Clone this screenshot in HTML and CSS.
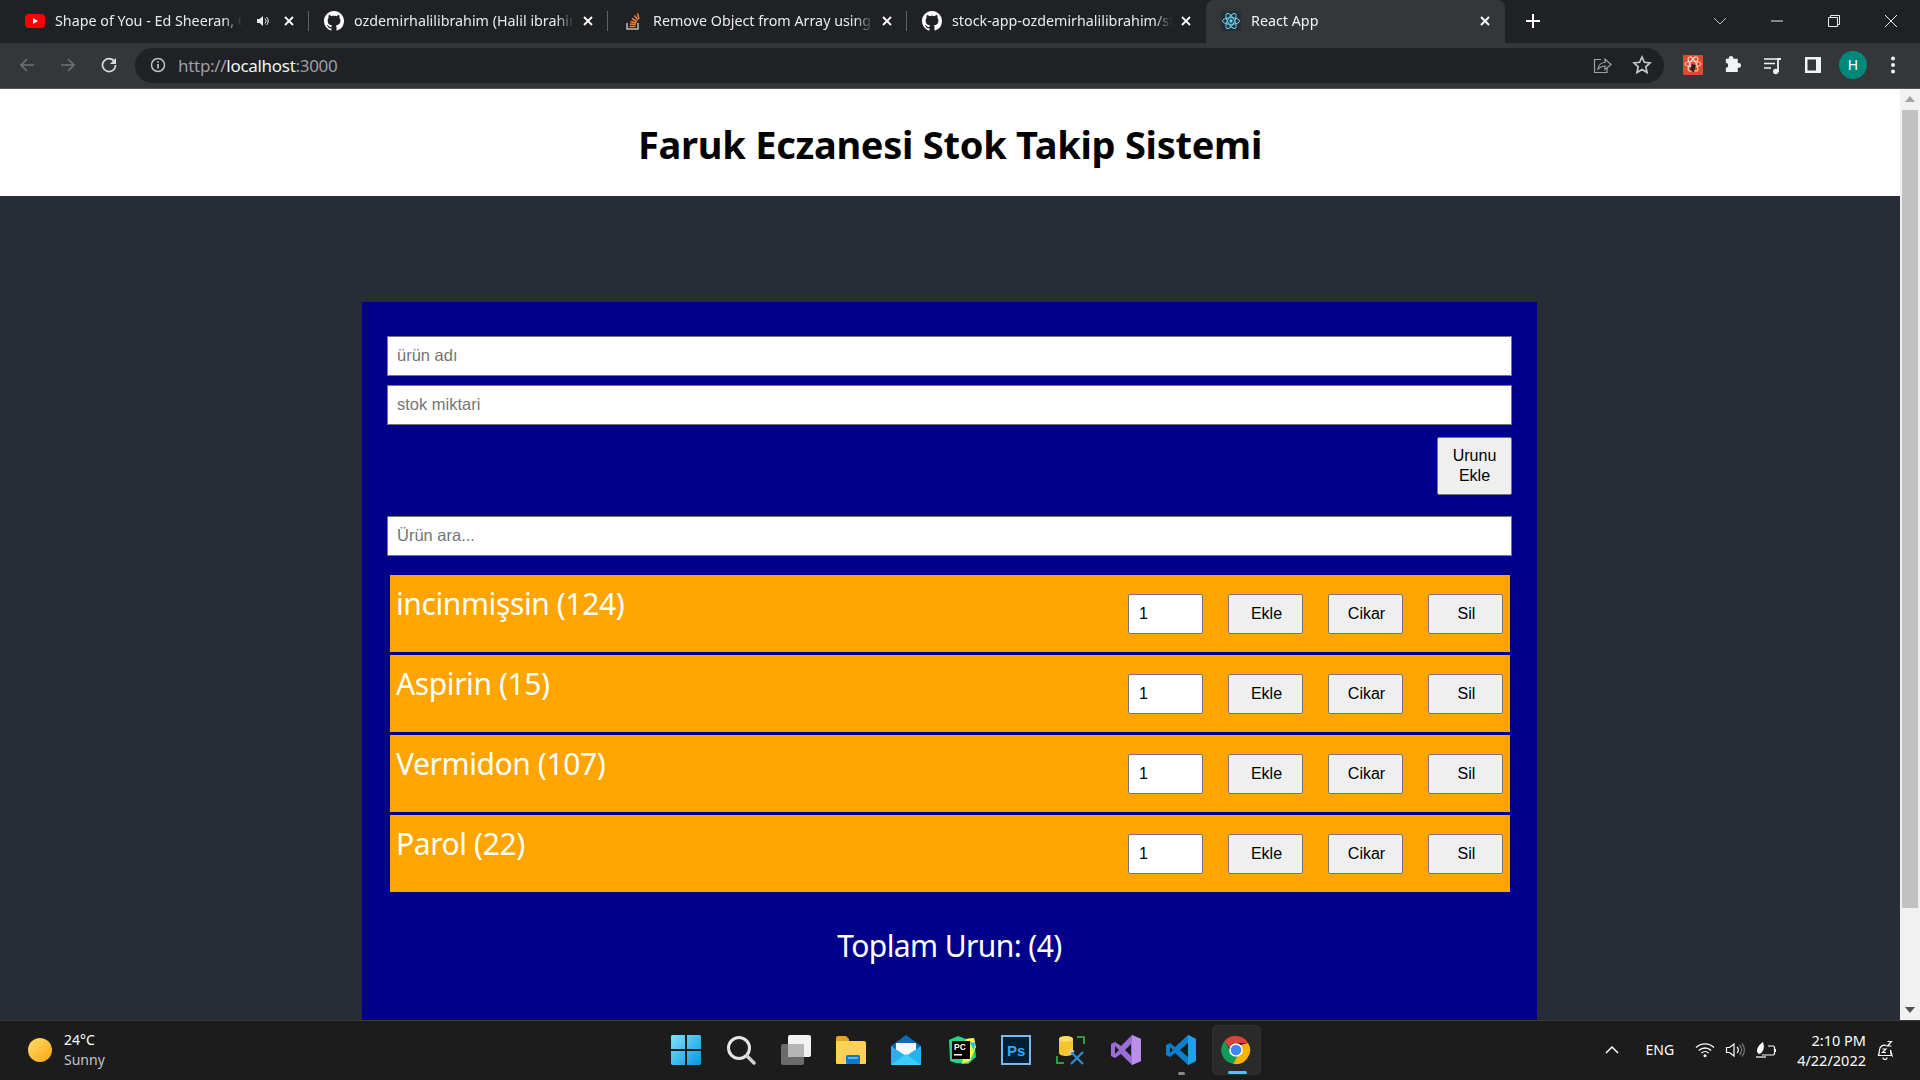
FILE: index.html
```html
<!DOCTYPE html>
<html lang="en">
<head>
    <meta charset="UTF-8">
    <meta name="viewport" content="width=device-width, initial-scale=1.0">
    <title>React App</title>
    <link rel="stylesheet" href="styles.css">
</head>
<body>
    <svg class="sprites" width="0" height="0">
        <symbol id="github" viewBox="0 0 16 16"><path fill="#fff" d="M8 0C3.58 0 0 3.58 0 8c0 3.54 2.29 6.53 5.47 7.59.4.07.55-.17.55-.38 0-.19-.01-.82-.01-1.49-2.01.37-2.53-.49-2.69-.94-.09-.23-.48-.94-.82-1.13-.28-.15-.68-.52-.01-.53.63-.01 1.08.58 1.23.82.72 1.21 1.87.87 2.33.66.07-.52.28-.87.51-1.07-1.78-.2-3.64-.89-3.64-3.95 0-.87.31-1.59.82-2.15-.08-.2-.36-1.02.08-2.12 0 0 .67-.21 2.2.82.64-.18 1.32-.27 2-.27.68 0 1.36.09 2 .27 1.53-1.04 2.2-.82 2.2-.82.44 1.1.16 1.92.08 2.12.51.56.82 1.27.82 2.15 0 3.07-1.87 3.75-3.65 3.95.29.25.54.73.54 1.48 0 1.07-.01 1.93-.01 2.2 0 .21.15.46.55.38A8.013 8.013 0 0016 8c0-4.42-3.58-8-8-8z"/></symbol>
        <symbol id="close" viewBox="0 0 12 12"><path d="M2 2l8 8M10 2l-8 8" stroke="#fff" stroke-width="1.8" fill="none"/></symbol>
    </svg>

    <div class="browser">
        <div class="tabstrip">
            <div class="tab">
                <svg class="tab-icon" viewBox="0 0 20 20"><rect y="3" width="20" height="14" rx="4" fill="#f00"/><path d="M8 7l5 3-5 3z" fill="#fff"/></svg>
                <span class="tab-title">Shape of You - Ed Sheeran, C</span>
                <svg class="tab-audio" viewBox="0 0 14 14"><path d="M1 5h2.500L7 2v10L3.500 9H1z" fill="#e8eaed"/><path d="M9 4.500a3.500 3.500 0 010 5M10.500 3a5.500 5.500 0 010 8" stroke="#e8eaed" fill="none"/></svg>
                <svg class="tab-close"><use href="#close"/></svg>
            </div>
            <div class="tab">
                <svg class="tab-icon"><use href="#github"/></svg>
                <span class="tab-title">ozdemirhalilibrahim (Halil ibrahim</span>
                <svg class="tab-close"><use href="#close"/></svg>
            </div>
            <div class="tab">
                <svg class="tab-icon" viewBox="0 0 20 20"><path d="M4 12v6h11v-6" fill="none" stroke="#bcbbbb" stroke-width="1.500"/><path d="M6.500 15.500h6M6.800 13l6 .6M7.500 10.500l5.800 1.500M9 7.500l5 3M11.500 4.500l3.500 4.500M14.500 2.500l1.500 5.500" stroke="#f48024" stroke-width="1.500"/></svg>
                <span class="tab-title">Remove Object from Array using</span>
                <svg class="tab-close"><use href="#close"/></svg>
            </div>
            <div class="tab">
                <svg class="tab-icon"><use href="#github"/></svg>
                <span class="tab-title">stock-app-ozdemirhalilibrahim/st</span>
                <svg class="tab-close"><use href="#close"/></svg>
            </div>
            <div class="tab tab-active">
                <svg class="tab-icon" viewBox="0 0 20 20"><rect width="20" height="20" rx="2" fill="#282c34"/><g fill="none" stroke="#61dafb" stroke-width="1"><ellipse cx="10" cy="10" rx="8.500" ry="3.300"/><ellipse cx="10" cy="10" rx="8.500" ry="3.300" transform="rotate(60 10 10)"/><ellipse cx="10" cy="10" rx="8.500" ry="3.300" transform="rotate(120 10 10)"/></g><circle cx="10" cy="10" r="1.700" fill="#61dafb"/></svg>
                <span class="tab-title">React App</span>
                <svg class="tab-close"><use href="#close"/></svg>
            </div>
            <svg class="new-tab" viewBox="0 0 16 16"><path d="M8 1v14M1 8h14" stroke="#fff" stroke-width="2"/></svg>
            <div class="window-controls">
                <svg viewBox="0 0 14 14"><path d="M1 4l6 6 6-6" stroke="#bdc1c6" fill="none"/></svg>
                <svg viewBox="0 0 14 14"><path d="M1 7h12" stroke="#e8eaed"/></svg>
                <svg viewBox="0 0 14 14"><path d="M1.500 3.500h9v9h-9zM3.500 3.500v-2h9v9h-2" stroke="#e8eaed" fill="none"/></svg>
                <svg viewBox="0 0 14 14"><path d="M1 1l12 12M13 1L1 13" stroke="#e8eaed" fill="none"/></svg>
            </div>
        </div>

        <div class="toolbar">
            <svg class="nav-icon" viewBox="0 0 16 16"><path d="M15 8H2M8 2L2 8l6 6" stroke="#6f7175" stroke-width="1.600" fill="none"/></svg>
            <svg class="nav-icon" viewBox="0 0 16 16"><path d="M1 8h13M8 2l6 6-6 6" stroke="#6f7175" stroke-width="1.600" fill="none"/></svg>
            <svg class="nav-icon" viewBox="0 0 16 16"><path d="M13.400 4.500A6.500 6.500 0 1014.500 8" stroke="#dadce0" stroke-width="1.700" fill="none"/><path d="M15 1v6H9z" fill="#dadce0"/></svg>
            <div class="omnibox">
                <svg class="omni-info" viewBox="0 0 16 16"><circle cx="8" cy="8" r="6.500" stroke="#bdc1c6" stroke-width="1.500" fill="none"/><path d="M8 7v4.500M8 4.300v1.500" stroke="#bdc1c6" stroke-width="1.700"/></svg>
                <span class="url">http://<b>localhost</b>:3000</span>
                <svg class="omni-icon" viewBox="0 0 20 20"><path d="M9 4.500H2.500v13H15V13" stroke="#9aa0a6" stroke-width="1.200" fill="none"/><path d="M6 14c.5-4 3.500-6.500 7-6.500V4l6 5.500-6 5V11c-3 0-5 1-7 3z" stroke="#9aa0a6" stroke-width="1.200" fill="none"/></svg>
                <svg class="omni-icon" viewBox="0 0 20 20"><path d="M10 2l2.400 5.300 5.600.6-4.200 3.900 1.200 5.700-5-2.900-5 2.900 1.200-5.700L2 7.900l5.600-.6z" stroke="#c4c7cb" stroke-width="1.700" fill="none"/></svg>
            </div>
            <div class="extensions">
                <svg viewBox="0 0 20 20"><rect width="20" height="20" rx="1" fill="#e0492f"/><g fill="none" stroke="#f6d5cc" stroke-width="1"><ellipse cx="10" cy="9" rx="8" ry="3"/><ellipse cx="10" cy="9" rx="8" ry="3" transform="rotate(60 10 9)"/><ellipse cx="10" cy="9" rx="8" ry="3" transform="rotate(120 10 9)"/></g><path d="M9 9l4 1-2 7-4-2z" fill="#222"/></svg>
                <svg viewBox="0 0 20 20"><path d="M8 1.500a2.500 2.500 0 012.500 2.500v.5H15v4.500h1a2.500 2.500 0 010 5h-1v4.500H2.500v-4.500a2.500 2.500 0 000-5V4.500h3V4A2.500 2.500 0 018 1.500z" fill="#f1f3f4" transform="translate(.5 -.5) scale(.95)"/></svg>
                <svg viewBox="0 0 20 20"><path d="M1 4h14M1 8.500h11M1 13h7" stroke="#f1f3f4" stroke-width="1.600"/><path d="M15 17V4h3" stroke="#f1f3f4" stroke-width="1.800" fill="none"/><circle cx="12.800" cy="16.500" r="2.700" fill="#f1f3f4"/></svg>
                <svg viewBox="0 0 20 20"><path d="M2 2h16v16H2zM4.500 4.500v11H13v-11z" fill="#f1f3f4" fill-rule="evenodd"/></svg>
                <div class="avatar">H</div>
                <svg viewBox="0 0 20 20"><circle cx="10" cy="3.500" r="2" fill="#f1f3f4"/><circle cx="10" cy="10" r="2" fill="#f1f3f4"/><circle cx="10" cy="16.500" r="2" fill="#f1f3f4"/></svg>
            </div>
        </div>

        <div class="viewport">
            <div class="page">
                <header class="app-header">
                    <h1>Faruk Eczanesi Stok Takip Sistemi</h1>
                </header>
                <main class="app-body">
                    <section class="panel">
                        <form class="add-form">
                            <input class="text-input" type="text" placeholder="ürün adı">
                            <input class="text-input" type="text" placeholder="stok miktari">
                            <div class="add-actions">
                                <button class="add-btn" type="button">Urunu Ekle</button>
                            </div>
                        </form>
                        <input class="text-input" type="text" placeholder="Ürün ara...">
                        <ul class="stock-list">
                            <li class="stock-row">
                                <span class="stock-name">incinmişsin (124)</span>
                                <input class="qty" type="text" value="1">
                                <button class="row-btn" type="button">Ekle</button>
                                <button class="row-btn" type="button">Cikar</button>
                                <button class="row-btn" type="button">Sil</button>
                            </li>
                            <li class="stock-row">
                                <span class="stock-name">Aspirin (15)</span>
                                <input class="qty" type="text" value="1">
                                <button class="row-btn" type="button">Ekle</button>
                                <button class="row-btn" type="button">Cikar</button>
                                <button class="row-btn" type="button">Sil</button>
                            </li>
                            <li class="stock-row">
                                <span class="stock-name">Vermidon (107)</span>
                                <input class="qty" type="text" value="1">
                                <button class="row-btn" type="button">Ekle</button>
                                <button class="row-btn" type="button">Cikar</button>
                                <button class="row-btn" type="button">Sil</button>
                            </li>
                            <li class="stock-row">
                                <span class="stock-name">Parol (22)</span>
                                <input class="qty" type="text" value="1">
                                <button class="row-btn" type="button">Ekle</button>
                                <button class="row-btn" type="button">Cikar</button>
                                <button class="row-btn" type="button">Sil</button>
                            </li>
                        </ul>
                        <p class="total">Toplam Urun: (4)</p>
                    </section>
                </main>
            </div>
            <div class="scrollbar">
                <div class="scroll-arrow"><svg viewBox="0 0 10 6"><path d="M5 0l5 6H0z" fill="#a3a3a3"/></svg></div>
                <div class="scroll-track"><div class="scroll-thumb"></div></div>
                <div class="scroll-arrow"><svg viewBox="0 0 10 6"><path d="M5 6l5-6H0z" fill="#505050"/></svg></div>
            </div>
        </div>

        <footer class="taskbar">
            <div class="weather">
                <div class="sun"></div>
                <div class="weather-text">
                    <span>24°C</span>
                    <span class="weather-sub">Sunny</span>
                </div>
            </div>

            <div class="task-icons">
                <div class="task-icon">
                    <svg viewBox="0 0 30 30"><defs><linearGradient id="win" x1="0" y1="0" x2="1" y2="1"><stop offset="0" stop-color="#7fe3fb"/><stop offset="1" stop-color="#0a94e0"/></linearGradient></defs><path d="M1 0h13v14H0V1zM16 0h13l1 1v13H16zM0 16h14v14H1l-1-1zM16 16h14v13l-1 1H16z" fill="url(#win)"/></svg>
                </div>
                <div class="task-icon">
                    <svg viewBox="0 0 30 30"><circle cx="13" cy="13" r="10.500" fill="none" stroke="#e6e6e6" stroke-width="3"/><path d="M21 21l7 7" stroke="#d0d0d0" stroke-width="3.500" stroke-linecap="round"/></svg>
                </div>
                <div class="task-icon">
                    <svg viewBox="0 0 30 30"><rect x="7" y="0" width="23" height="22" rx="2" fill="#f2f2f2"/><rect x="0" y="9" width="23" height="21" rx="2" fill="#6b6b6b"/><rect x="7" y="9" width="16" height="13" fill="#b5b5b5"/></svg>
                </div>
                <div class="task-icon">
                    <svg viewBox="0 0 30 30"><path d="M0 3a2 2 0 012-2h8l3 3v4H0z" fill="#e3a41e"/><path d="M0 6h28a2 2 0 012 2v20a1 1 0 01-1 1H1a1 1 0 01-1-1z" fill="#fcd256"/><rect x="10" y="20" width="14" height="9" rx="1.500" fill="#0f78c9"/><rect x="12" y="22" width="10" height="2" fill="#59b8ee"/></svg>
                </div>
                <div class="task-icon">
                    <svg viewBox="0 0 30 30"><path d="M0 11L15 0l15 11v19H0z" fill="#0b6bc0"/><path d="M5 8h20v12H5z" fill="#f2f7fb"/><path d="M0 11l15 10 15-10v19H0z" fill="#23b4f0"/><path d="M0 30l15-11 15 11z" fill="#3fcbf7"/></svg>
                </div>
                <div class="task-icon">
                    <svg viewBox="0 0 30 30"><path d="M3 5l9-4 8 3 8-1 1 10 1 9-8 7-12-1-6-2z" fill="#21d789"/><path d="M20 4l8-1 2 9-6 14-8 3z" fill="#fcf84a"/><path d="M24 7l5 1-1 8z" fill="#07c3f2"/><rect x="6" y="6" width="18" height="18" fill="#000"/><text class="pc-label" x="8" y="15">PC</text><rect x="8" y="19" width="8" height="1.500" fill="#fff"/></svg>
                </div>
                <div class="task-icon">
                    <svg viewBox="0 0 30 30"><rect x="1" y="1" width="28" height="28" fill="#001e36" stroke="#7cb7ee" stroke-width="2"/><text class="ps-label" x="6" y="21">Ps</text></svg>
                </div>
                <div class="task-icon">
                    <svg viewBox="0 0 30 30"><path d="M3 4c0-4 14-4 14 0v14c0 4-14 4-14 0z" fill="#f2c531"/><ellipse cx="10" cy="4" rx="7" ry="2.800" fill="#f9dc6b"/><path d="M21 2h7v7M1 21v7h7" stroke="#2f9a46" stroke-width="2" fill="none"/><path d="M15 17l12 12M27 17L15 29" stroke="#2e8fd8" stroke-width="2.200"/><path d="M13 19l3-4 2 2" stroke="#c9d5de" stroke-width="1.500" fill="none"/></svg>
                </div>
                <div class="task-icon">
                    <svg viewBox="0 0 30 30"><path d="M21 0l9 4v22l-9 4-11-11-6 4-4-2V9l4-2 6 4zM4 11v8l4-4zM20 9l-6 6 6 6z" fill="#9a6dd7" fill-rule="evenodd"/><path d="M21 0l9 4v22l-9 4z" fill="#b98fe8"/></svg>
                </div>
                <div class="task-icon task-running">
                    <svg viewBox="0 0 30 30"><path d="M22 0l8 4v22l-8 4L9 18l-5 4-4-2V10l4-2 5 4zM4 12v6l3-3zM22 8l-8 7 8 7z" fill="#0e7fcc" fill-rule="evenodd"/><path d="M22 0l8 4v22l-8 4V22 8z" fill="#21a0ea"/></svg>
                </div>
                <div class="task-icon task-active">
                    <svg viewBox="0 0 30 30"><path d="M15 1a14 14 0 0112.100 7H15a7 7 0 00-6.700 5L3.500 6A14 14 0 0115 1z" fill="#db4437"/><path d="M3.500 6l6 10.500a7 7 0 006.500 5.400L12 28.800A14 14 0 013.500 6z" fill="#0f9d58"/><path d="M27.100 8A14 14 0 0112 28.800l6-10.300A7 7 0 0019.500 10z" fill="#f4b400"/><circle cx="15" cy="15" r="6.800" fill="#fff"/><circle cx="15" cy="15" r="5.300" fill="#4285f4"/></svg>
                </div>
            </div>

            <div class="tray">
                <svg class="tray-caret" viewBox="0 0 14 8"><path d="M1 7l6-6 6 6" stroke="#fff" stroke-width="1.500" fill="none"/></svg>
                <span class="tray-lang">ENG</span>
                <svg class="tray-icon tray-wifi" viewBox="0 0 20 16"><path d="M1 5.500a13 13 0 0118 0M3.800 8.500a9 9 0 0112.400 0M6.500 11a5 5 0 017 0" stroke="#fff" stroke-width="1.300" fill="none"/><circle cx="10" cy="13.800" r="1.500" fill="#fff"/></svg>
                <svg class="tray-icon tray-sound" viewBox="0 0 20 16"><path d="M1.500 5.500h3L9 2v12L4.500 10.500h-3z" stroke="#fff" stroke-width="1.200" fill="none"/><path d="M12 5a4 4 0 010 6" stroke="#fff" stroke-width="1.200" fill="none"/><path d="M14.500 3a7 7 0 010 10M17 1.500a10 10 0 010 13" stroke="#777" stroke-width="1.200" fill="none"/></svg>
                <svg class="tray-icon" viewBox="0 0 20 16"><path d="M6 13h11a1.500 1.500 0 001.500-1.500v-6A1.500 1.500 0 0017 4h-5M19.500 7v3" stroke="#fff" stroke-width="1.200" fill="none"/><path d="M0 15h10" stroke="#fff" stroke-width="1.200"/><path d="M1 9c0-4 3-7 6-9 1 4 2 8-3 12-1.500 0-3-1-3-3z" fill="#fff"/></svg>
                <div class="clock">
                    <span>2:10 PM</span>
                    <span>4/22/2022</span>
                </div>
                <svg class="tray-bell" viewBox="0 0 20 20"><path d="M3 15.500c1.500-1.500 1.500-3 1.500-5.500a5 5 0 017-4.500M15.500 10c0 2.500 0 4 1.500 5.500zM3 15.500h14M8 17.500a2 2 0 004 0" stroke="#fff" stroke-width="1.200" fill="none"/><path d="M12.500 1.500h4l-4 4.500h4M7.500 9h3.500l-3.500 3.500H11" stroke="#fff" stroke-width="1.200" fill="none"/></svg>
            </div>
        </footer>
    </div>
</body>
</html>
```

FILE: styles.css
```css
* {
    box-sizing: border-box;
}

html, body {
    height: 100%;
    margin: 0;
    overflow: hidden;
}

body {
    font-family: 'Noto Sans', sans-serif;
    background-color: #202124;
}

.sprites {
    display: block;
    height: 0;
}

.browser {
    display: flex;
    flex-direction: column;
    height: 100vh;
}

/* Tab strip */
.tabstrip {
    display: flex;
    align-items: center;
    height: 43px;
    padding-left: 10px;
    background-color: #202124;
    flex-shrink: 0;
}

.tab {
    display: flex;
    align-items: center;
    width: 299px;
    height: 43px;
    padding: 0 14px 2px 15px;
    color: #e8eaed;
    font-size: 14.3px;
    position: relative;
}

.tab:not(.tab-active):not(:nth-child(4))::after {
    content: "";
    position: absolute;
    right: 0;
    top: 11px;
    height: 20px;
    width: 1px;
    background-color: #5f6368;
}

.tab-active {
    background-color: #35363a;
    border-radius: 8px 8px 0 0;
    color: #f1f3f4;
}

.tab-icon {
    width: 20px;
    height: 20px;
    margin-right: 10px;
    flex-shrink: 0;
}

.tab-title {
    flex: 1;
    min-width: 0;
    white-space: nowrap;
    overflow: hidden;
    -webkit-mask-image: linear-gradient(to right, #000 calc(100% - 26px), transparent calc(100% - 8px));
    mask-image: linear-gradient(to right, #000 calc(100% - 26px), transparent calc(100% - 8px));
}

.tab-audio {
    width: 14px;
    height: 14px;
    margin: 0 13px 0 6px;
    flex-shrink: 0;
}

.tab-close {
    width: 12px;
    height: 12px;
    flex-shrink: 0;
}

.new-tab {
    width: 16px;
    height: 16px;
    margin: 0 0 2px 20px;
}

.window-controls {
    display: flex;
    align-items: center;
    margin-left: auto;
    padding: 0 22px 2px 0;
    gap: 43px;
}

.window-controls svg {
    width: 14px;
    height: 14px;
}

/* Toolbar and address bar */
.toolbar {
    display: flex;
    align-items: center;
    height: 46px;
    padding: 0 17px 1px 19px;
    background-color: #35363a;
    border-bottom: 1px solid #55565a;
    flex-shrink: 0;
}

.nav-icon {
    width: 16px;
    height: 16px;
    margin-right: 25px;
    flex-shrink: 0;
}

.nav-icon:nth-child(3) {
    margin-right: 18px;
}

.omnibox {
    display: flex;
    align-items: center;
    flex: 1;
    height: 35px;
    padding: 0 12px 0 15px;
    border-radius: 18px;
    background-color: #202124;
}

.omni-info {
    width: 16px;
    height: 16px;
    margin-right: 12px;
}

.url {
    flex: 1;
    color: #9aa0a6;
    font-size: 17px;
    letter-spacing: -0.3px;
}

.url b {
    color: #f1f3f4;
    font-weight: 400;
}

.omni-icon {
    width: 20px;
    height: 20px;
    margin-left: 20px;
}

.extensions {
    display: flex;
    align-items: center;
    justify-content: space-between;
    width: 220px;
    margin-left: 19px;
}

.extensions svg {
    width: 20px;
    height: 20px;
}

.avatar {
    width: 28px;
    height: 28px;
    margin: 0 -4px;
    border-radius: 50%;
    background-color: #00897b;
    color: #fff;
    font-size: 14px;
    line-height: 28px;
    text-align: center;
}

/* Page area */
.viewport {
    display: flex;
    flex: 1;
    min-height: 0;
}

.page {
    flex: 1;
    min-width: 0;
    overflow: hidden;
    background-color: #282c34;
}

.app-header {
    display: flex;
    align-items: center;
    justify-content: center;
    height: 107px;
    padding-top: 3px;
    background-color: #fff;
}

.app-header h1 {
    margin: 0;
    color: #000;
    font-size: 38px;
    font-weight: 700;
    letter-spacing: -0.27px;
}

.app-body {
    padding: 106px 1px 0 0;
}

.panel {
    width: 1175px;
    margin: 0 auto;
    padding: 34px 25px 60px;
    background-color: #00008b;
}

.add-form {
    display: flex;
    flex-direction: column;
    gap: 9px;
    margin-bottom: 21px;
}

.text-input {
    display: block;
    width: 100%;
    height: 40px;
    padding: 0 9px 2px;
    border: 1px solid #767676;
    border-radius: 0;
    background-color: #fff;
    font-family: 'Liberation Sans', sans-serif;
    font-size: 16.5px;
}

.text-input::placeholder, .qty::placeholder {
    color: #757575;
}

.add-actions {
    display: flex;
    justify-content: flex-end;
    margin-top: 3px;
}

.add-btn, .row-btn {
    width: 75px;
    border: 1px solid #767676;
    border-radius: 2px;
    background-color: #efefef;
    color: #000;
    font-family: 'Liberation Sans', sans-serif;
    font-size: 16px;
    padding: 1px 5px 1px 7px;
}

.add-btn {
    height: 58px;
    padding: 1px 6px;
    line-height: 20px;
}

.stock-list {
    display: flex;
    flex-direction: column;
    gap: 3px;
    list-style: none;
    margin: 19px 2px 0 3px;
    padding: 0;
}

.stock-row {
    display: flex;
    align-items: center;
    gap: 25px;
    height: 77px;
    padding: 0 7px 0 6px;
    background-color: #ffa500;
}

.stock-name {
    flex: 1;
    align-self: flex-start;
    margin-top: 8px;
    color: #fff;
    font-size: 30px;
    letter-spacing: -0.4px;
}

.qty {
    width: 75px;
    height: 40px;
    padding: 0 11px 0 10px;
    border: 1px solid #767676;
    border-radius: 2px;
    background-color: #fff;
    font-family: 'Liberation Sans', sans-serif;
    font-size: 16px;
}

.row-btn {
    height: 40px;
}

.total {
    margin: 33px 0 0;
    color: #fff;
    font-size: 30px;
    letter-spacing: -0.6px;
    text-align: center;
}

/* Scrollbar */
.scrollbar {
    display: flex;
    flex-direction: column;
    width: 20px;
    background-color: #f1f1f1;
}

.scroll-arrow {
    display: flex;
    align-items: center;
    justify-content: center;
    height: 20px;
    flex-shrink: 0;
}

.scroll-arrow svg {
    width: 10px;
    height: 6px;
}

.scroll-track {
    flex: 1;
    padding: 1px 2px;
}

.scroll-thumb {
    height: 798px;
    background-color: #c1c1c1;
}

/* Windows taskbar */
.taskbar {
    display: grid;
    grid-template-columns: 1fr auto 1fr;
    align-items: center;
    height: 60px;
    padding-bottom: 2px;
    border-top: 1px solid #3a3a3a;
    background-color: #1c1c1c;
    color: #fff;
    flex-shrink: 0;
    font-size: 14px;
}

.weather {
    display: flex;
    align-items: center;
    padding-left: 28px;
    gap: 12px;
}

.sun {
    width: 24px;
    height: 24px;
    border-radius: 50%;
    background: linear-gradient(135deg, #ffdf6b, #fda50f);
}

.weather-text {
    display: flex;
    flex-direction: column;
    line-height: 20px;
}

.weather-sub {
    color: #c4c4c4;
}

.task-icons {
    display: flex;
    align-items: center;
    padding-left: 2px;
}

.task-icon {
    position: relative;
    display: flex;
    align-items: center;
    justify-content: center;
    width: 55px;
    height: 50px;
}

.task-icon svg {
    width: 30px;
    height: 30px;
}

.pc-label {
    fill: #fff;
    font-family: 'Liberation Sans', sans-serif;
    font-size: 8.500px;
    font-weight: 700;
}

.ps-label {
    fill: #31a8ff;
    font-family: 'Liberation Sans', sans-serif;
    font-size: 15px;
    font-weight: 700;
}

.task-running::after {
    content: "";
    position: absolute;
    left: 24px;
    bottom: 0;
    width: 7px;
    height: 3px;
    border-radius: 2px;
    background-color: #8a8a8a;
}

.task-active {
    width: 49px;
    margin-left: 3px;
    margin-right: 3px;
    border: 1px solid #303030;
    border-radius: 5px;
    background-color: #2a2a2a;
}

.task-active::after {
    content: "";
    position: absolute;
    left: 15px;
    bottom: 0;
    width: 19px;
    height: 3px;
    border-radius: 2px;
    background-color: #4cc2ff;
}

.tray {
    display: flex;
    align-items: center;
    justify-content: flex-end;
    padding-right: 25px;
}

.tray-caret {
    width: 14px;
    height: 8px;
    margin-right: 27px;
}

.tray-lang {
    margin-right: 21px;
}

.tray-icon {
    width: 20px;
    height: 16px;
    margin-right: 9px;
}

.tray-wifi {
    margin-right: 10px;
}

.tray-sound {
    margin-right: 11px;
}

.clock {
    display: flex;
    flex-direction: column;
    align-items: flex-end;
    margin-left: 12px;
    font-size: 14.5px;
    line-height: 20px;
}

.tray-bell {
    width: 20px;
    height: 20px;
    margin-left: 9px;
}
```
